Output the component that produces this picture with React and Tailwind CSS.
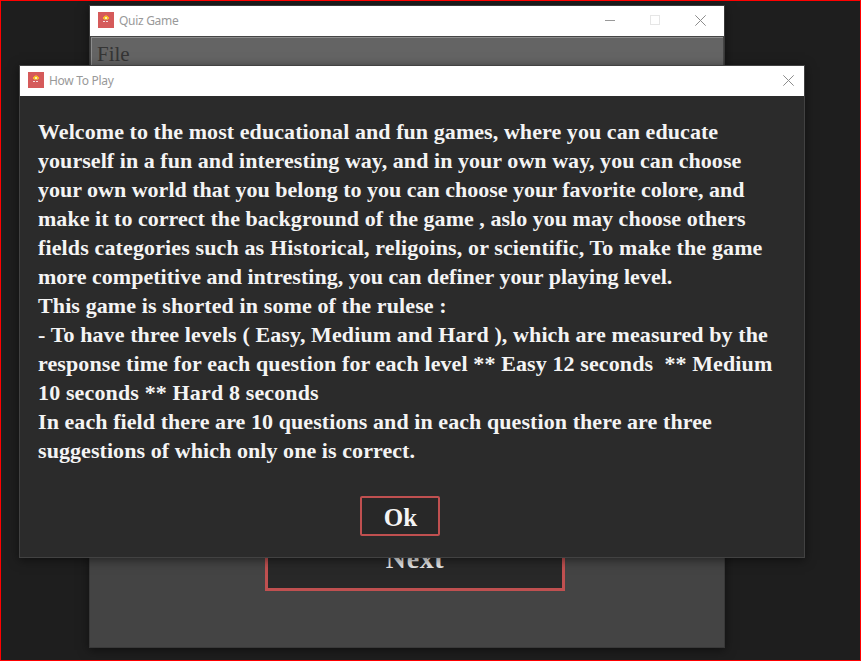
import React from "react";

const lines = [
  { text: "Welcome to the most educational and fun games, where you can educate", cls: "tracking-[0.07px]" },
  { text: "yourself in a fun and interesting way, and in your own way, you can choose", cls: "tracking-[0.05px]" },
  { text: "your own world that you belong to you can choose your favorite colore, and", cls: "tracking-[0px]" },
  { text: "make it to correct the background of the game , aslo you may choose others", cls: "tracking-[0.035px]" },
  { text: "fields categories such as Historical, religoins, or scientific, To make the game", cls: "tracking-[0.13px]" },
  { text: "more competitive and intresting, you can definer your playing level.", cls: "tracking-[0.015px]" },
  { text: "This game is shorted in some of the rulese :", cls: "tracking-[0.11px]" },
  { text: "- To have three levels ( Easy, Medium and Hard ), which are measured by the", cls: "tracking-[0.11px]" },
  { text: "response time for each question for each level ** Easy 12 seconds  ** Medium", cls: "tracking-[0.11px]" },
  { text: "10 seconds ** Hard 8 seconds", cls: "tracking-[0.14px]" },
  { text: "In each field there are 10 questions and in each question there are three", cls: "tracking-[0.075px]" },
  { text: "suggestions of which only one is correct.", cls: "tracking-[0.07px]" },
];

function AppIcon() {
  return (
    <svg className="mb-[2px] h-4 w-4 shrink-0" viewBox="0 0 16 16" shapeRendering="crispEdges">
      <rect width="16" height="16" fill="#d55a5a" />
      <rect x="7" y="3" width="2" height="1" fill="#e88b3c" />
      <rect x="6" y="4" width="4" height="1" fill="#f5b921" />
      <rect x="5" y="5" width="6" height="2" fill="#f6bd25" />
      <rect x="7" y="5" width="2" height="2" fill="#fff0b0" />
      <rect x="6" y="7" width="4" height="1" fill="#e6a04a" />
      <rect x="5" y="9" width="2" height="1" fill="#f6dede" />
      <rect x="8" y="9" width="2" height="1" fill="#f6dede" />
    </svg>
  );
}

function CloseIcon() {
  return (
    <svg className="h-[11px] w-[11px]" viewBox="0 0 11 11" fill="none" stroke="#8c8c8c">
      <path d="M0.3 0.3L10.7 10.7M10.7 0.3L0.3 10.7" />
    </svg>
  );
}

function TitleBar({ title, children }) {
  return (
    <div className="flex h-[30px] items-center bg-white pl-2">
      <AppIcon />
      <span className="ml-[5px] font-['Noto_Sans',sans-serif] text-[12px] leading-4 tracking-[-0.3px] text-[#999999]">{title}</span>
      <div className="ml-auto flex h-full items-center pb-[2px]">{children}</div>
    </div>
  );
}

export default function App() {
  return (
    <div className="relative h-[661px] w-[861px] overflow-hidden border border-[#ff0000] bg-[#1e1e1e] font-['Liberation_Serif',serif]">
      <section className="absolute left-[88px] top-[4px] flex h-[643px] w-[636px] flex-col border border-[#393939] bg-[#444444] shadow-[0_2px_10px_rgba(0,0,0,0.5)]">
        <TitleBar title="Quiz Game">
          <div className="mr-[35px] mt-px h-px w-[10px] bg-[#999999]" />
          <div className="mr-[35px] h-[10px] w-[10px] border border-[#e6e6e6]" />
          <div className="mr-[18px]"><CloseIcon /></div>
        </TitleBar>
        <div className="h-[38px] border border-[#454545] bg-[#646464]">
          <div className="h-full border-l border-t border-[#8c8c8c] pl-[5px] pt-1 text-[21px] leading-6 text-[#353535]">File</div>
        </div>
        <div className="mb-[56px] ml-[175px] mt-auto flex h-[66px] w-[300px] items-center justify-center border-[3px] border-[#c05050] bg-[#282828] pt-[2px] text-[28px] font-bold tracking-[0.6px] text-[#e6e6e6]">
          <span>Next</span>
        </div>
      </section>

      <section className="absolute left-[18px] top-[64px] flex h-[493px] w-[786px] flex-col border border-[#424242] bg-[#2b2b2b] shadow-[0_2px_10px_rgba(0,0,0,0.5)]">
        <TitleBar title="How To Play">
          <div className="mr-[10px]"><CloseIcon /></div>
        </TitleBar>
        <div className="pl-[18px] pt-[21px] text-[22px] font-bold leading-[29px] text-[#f4f4f4]">
          {lines.map((line) => (
            <div key={line.text} className="whitespace-pre">
              <span className={line.cls}>{line.text}</span>
            </div>
          ))}
        </div>
        <button className="ml-[340px] mt-[31px] h-10 w-20 rounded-[2px] border-2 border-[#c05050] bg-[#282828] pl-px pt-[3px] text-[25px] font-bold leading-none text-[#f4f4f4]">
          Ok
        </button>
      </section>
    </div>
  );
}
